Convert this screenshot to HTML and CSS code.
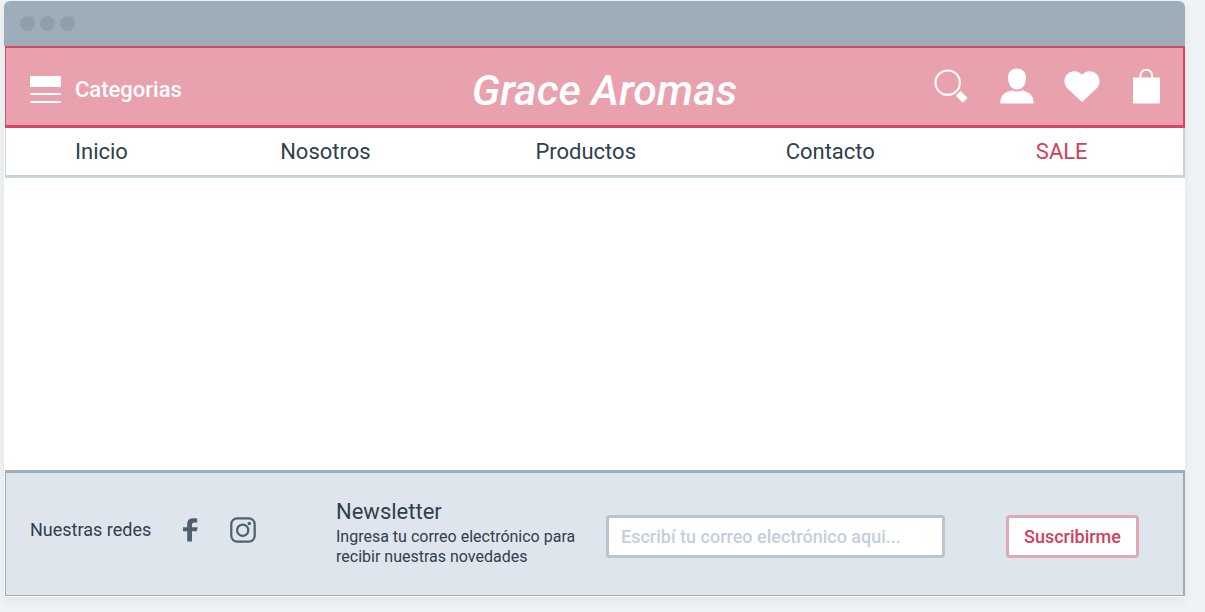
FILE: index.html
```html
<!DOCTYPE html>
<html lang="es">
<head>
<meta charset="utf-8">
<meta name="viewport" content="width=device-width, initial-scale=1">
<title>Grace Aromas</title>
<link rel="stylesheet" href="styles.css">
</head>
<body>
<div class="window">
  <div class="titlebar"><span class="dot"></span><span class="dot"></span><span class="dot"></span></div>
  <header class="header">
    <button class="categories" type="button">
      <svg width="31" height="28" viewBox="0 0 31 28" fill="#fff" aria-hidden="true"><rect width="31" height="11" rx="1"/><rect y="17" width="31" height="2" rx="1"/><rect y="25" width="31" height="2" rx="1"/></svg>
      <span>Categorias</span>
    </button>
    <h1 class="brand">Grace Aromas</h1>
    <div class="actions">
      <button class="icon-button" type="button" aria-label="Buscar">
        <svg width="35" height="36" viewBox="0 0 35 36" aria-hidden="true"><circle cx="13.7" cy="14.7" r="12.2" fill="none" stroke="#fff" stroke-width="2.1"/><path d="M26.6 23 33.6 29.9 28.7 34.8 21.8 27.8Z" fill="#fff"/></svg>
      </button>
      <button class="icon-button" type="button" aria-label="Mi cuenta">
        <svg width="34" height="36" viewBox="0 0 34 36" fill="#fff" aria-hidden="true"><path d="M17 .5C22.8.5 26 4.5 26 9.8 26 16 22.8 21.5 17 21.5S8 16 8 9.8C8 4.5 11.200 .5 17 .5Z"/><path d="M11 22.3Q17 24.6 23 22.3C24 23.800 33.700 23.500 33.700 35.500H.3C.3 23.500 10 23.800 11 22.300Z"/></svg>
      </button>
      <button class="icon-button" type="button" aria-label="Favoritos">
        <svg width="36" height="36" viewBox="0 0 36 36" fill="#fff" aria-hidden="true"><path d="M18 34 3.3 20.3C-1.6 15.6.1 6.8 6.4 4.1 10.600 2.300 15.400 3.400 18 6.800 20.600 3.400 25.400 2.300 29.600 4.100 35.900 6.800 37.600 15.600 32.700 20.300Z"/></svg>
      </button>
      <button class="icon-button" type="button" aria-label="Carrito">
        <svg width="27" height="36" viewBox="0 0 27 36" aria-hidden="true"><rect y="9.5" width="27" height="26" rx=".5" fill="#fff"/><path d="M7.500 11V7.500a5.800 5.800 0 0 1 11.600 0V11" fill="none" stroke="#fff" stroke-width="2"/></svg>
      </button>
    </div>
  </header>
  <nav class="nav" aria-label="Principal">
    <a href="#inicio">Inicio</a>
    <a href="#nosotros">Nosotros</a>
    <a href="#productos">Productos</a>
    <a href="#contacto">Contacto</a>
    <a class="sale" href="#sale">SALE</a>
  </nav>
  <main class="content"></main>
  <footer class="footer">
    <div class="social">
      <span>Nuestras redes</span>
      <a class="facebook" href="#facebook" aria-label="Facebook">
        <svg width="15" height="24" viewBox="0 0 15 24" fill="#4c6070" aria-hidden="true"><path d="M4.2 23.5V13.2H0V9.3h4.2V6.2C4.2 2.2 6.4.2 10 .2c1.6 0 3.2.1 4.2.3v4.1h-2.4C9.9 4.6 9 5.3 9 6.9v2.4h5.7l-1 3.9H9v10.3Z"/></svg>
      </a>
      <a class="instagram" href="#instagram" aria-label="Instagram">
        <svg width="26" height="26" viewBox="0 0 26 26" fill="none" stroke="#4c6070" stroke-width="2.2" aria-hidden="true"><rect x="1.3" y="1.3" width="23.4" height="23.4" rx="6"/><circle cx="12.7" cy="13.3" r="5.6"/><circle cx="19.3" cy="6.5" r="1.8" fill="#4c6070" stroke="none"/></svg>
      </a>
    </div>
    <div class="newsletter">
      <h2>Newsletter</h2>
      <p>Ingresa tu correo electrónico para<br>recibir nuestras novedades</p>
    </div>
    <form class="subscribe">
      <input type="email" aria-label="Correo electrónico" placeholder="Escribí tu correo electrónico aqui...">
      <button type="button">Suscribirme</button>
    </form>
  </footer>
</div>
</body>
</html>
```
FILE: styles.css
```css
* {
  box-sizing: border-box;
}

body {
  margin: 0;
  padding: 1px 20px 15px 4px;
  min-height: 100vh;
  display: flex;
  background: #eff3f6;
  color: #2f404e;
  font-family: Roboto, "Liberation Sans", sans-serif;
}

button {
  border: 0;
  padding: 0;
  background: none;
  font: inherit;
  cursor: pointer;
}

a {
  color: inherit;
  text-decoration: none;
}

svg {
  display: block;
}

.window {
  flex: 1;
  display: flex;
  flex-direction: column;
  border-left: 1px solid #fff;
  border-bottom: 1px solid #fff;
  border-radius: 6px 6px 0 0;
  background: #fff;
  box-shadow: 0 4px 10px rgba(60, 80, 90, 0.08);
}

.titlebar {
  display: flex;
  align-items: center;
  gap: 5px;
  height: 45px;
  margin-left: -1px;
  padding-left: 16px;
  border-radius: 6px 6px 0 0;
  background: #9eadba;
}

.dot {
  width: 15px;
  height: 15px;
  border-radius: 50%;
  background: #8e9fae;
}

.header {
  display: grid;
  grid-template-columns: 1fr auto 1fr;
  align-items: center;
  height: 82px;
  padding: 6px 4px 0 24px;
  border: solid #d4495f;
  border-width: 2px 2px 3px 1px;
  background: #e9a1ad;
  color: #fff;
}

.categories {
  display: flex;
  align-items: center;
  justify-self: start;
  gap: 14px;
  color: #fff;
  font-size: 22px;
  font-weight: 500;
}

.brand {
  margin: 0;
  font-size: 43px;
  font-weight: 500;
  font-style: italic;
}

.actions {
  display: grid;
  grid-template-columns: repeat(4, 65px);
  justify-items: center;
  justify-self: end;
  padding-bottom: 8px;
}

.nav {
  display: grid;
  grid-template-columns: 205fr 255fr 250fr 250fr 147fr;
  align-items: center;
  height: 50px;
  padding-left: 69px;
  border: solid #c8d3de;
  border-width: 0 2px 3px 1px;
  font-size: 22px;
}

.sale {
  color: #d4405a;
}

.content {
  flex: 1;
}

.footer {
  display: grid;
  grid-template-columns: 306fr 270fr 533fr;
  align-items: center;
  height: 126px;
  padding: 0 44px 0 24px;
  border: solid #9eadba;
  border-width: 3px 2px 1px 1px;
  background: #dfe5ed;
}

.social {
  display: flex;
  align-items: center;
  gap: 32px;
  padding-bottom: 9px;
  font-size: 18px;
}

.newsletter {
  padding-bottom: 2px;
}

.newsletter h2 {
  margin: 0 0 2px;
  font-size: 22px;
  font-weight: 400;
  line-height: 26px;
}

.newsletter p {
  margin: 0;
  font-size: 16px;
  line-height: 20px;
}

.subscribe {
  display: flex;
  gap: 61px;
  padding-top: 4px;
}

.subscribe input,
.subscribe button {
  height: 43px;
  border: 3px solid #b8c5d1;
  border-radius: 4px;
  background: #fff;
  font: 500 18px Roboto, "Liberation Sans", sans-serif;
}

.subscribe input {
  flex: 1;
  min-width: 0;
  padding: 0 12px;
  color: #2f404e;
}

.subscribe input::placeholder {
  color: #c3cfdc;
  opacity: 1;
}

.subscribe button {
  width: 133px;
  border-color: #e1a9b7;
  color: #d4405a;
}
```
